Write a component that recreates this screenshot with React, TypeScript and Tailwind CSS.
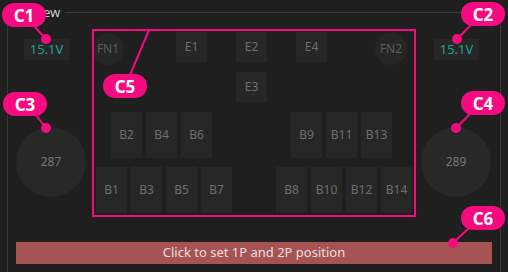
import React from "react";

const PINK = "#f60a80";

function Key({ label, ml, tall }: { label: string; ml: number; tall?: boolean }) {
  return (
    <div
      className={`flex items-center justify-center w-[31px] bg-[#272727] text-[12px] text-[#6e6e6e] ${tall ? "h-[46px]" : "h-[30px]"}`}
      style={{ marginLeft: ml }}
    >
      {label}
    </div>
  );
}

function Badge({ label, x, y }: { label: string; x: number; y: number }) {
  return (
    <div
      className="absolute w-[44px] h-[24px] rounded-full bg-[#f60a80] text-white font-bold text-[17px] flex items-center justify-center leading-none"
      style={{ left: x, top: y }}
    >
      {label}
    </div>
  );
}

export default function App() {
  return (
    <div
      className="relative w-[508px] h-[272px] overflow-hidden bg-[#1f1f1f] px-[7px] pt-[3px]"
      style={{ fontFamily: '"Noto Sans", "Open Sans", sans-serif' }}
    >
      <fieldset className="border border-[#3a3a3a] h-[300px] m-0 p-0 min-w-0">
        <legend className="ml-[0px] px-[5px] text-[13px] leading-[18px] text-[#c8c8c8]">Preview</legend>
        <div className="flex">
          {/* left column */}
          <div className="w-[84px] flex flex-col">
            <div className="ml-[16px] mt-[18px] w-[45px] h-[21px] bg-[#272727] flex items-center justify-center text-[13px] text-[#1ba39a]">
              15.1V
            </div>
            <div className="ml-[8px] mt-[67px] w-[70px] h-[70px] rounded-full bg-[#282828] flex items-center justify-center text-[12px] text-[#777]">
              287
            </div>
          </div>
          {/* center */}
          <div className="w-[323px] flex flex-col pt-[11px]">
            <div className="flex items-start h-[33px]">
              <div className="mt-[1px] w-[32px] h-[32px] rounded-full bg-[#262626] flex items-center justify-center text-[12px] text-[#5c5c5c]">
                FN1
              </div>
              <Key label="E1" ml={52} />
              <Key label="E2" ml={29} />
              <Key label="E4" ml={29} />
              <div className="ml-[48px] mt-[1px] w-[32px] h-[32px] rounded-full bg-[#262626] flex items-center justify-center text-[12px] text-[#5c5c5c]">
                FN2
              </div>
            </div>
            <div className="flex mt-[7px]">
              <Key label="E3" ml={144} />
            </div>
            <div className="flex mt-[10px]">
              <Key label="B2" ml={19} tall />
              <Key label="B4" ml={4} tall />
              <Key label="B6" ml={4} tall />
              <Key label="B9" ml={79} tall />
              <Key label="B11" ml={4} tall />
              <Key label="B13" ml={4} tall />
            </div>
            <div className="flex mt-[9px]">
              <Key label="B1" ml={4} tall />
              <Key label="B3" ml={4} tall />
              <Key label="B5" ml={4} tall />
              <Key label="B7" ml={4} tall />
              <Key label="B8" ml={44} tall />
              <Key label="B10" ml={4} tall />
              <Key label="B12" ml={4} tall />
              <Key label="B14" ml={4} tall />
            </div>
          </div>
          {/* right column */}
          <div className="flex-1 flex flex-col">
            <div className="ml-[19px] mt-[18px] w-[45px] h-[21px] bg-[#272727] flex items-center justify-center text-[13px] text-[#1ba39a]">
              15.1V
            </div>
            <div className="ml-[6px] mt-[67px] w-[70px] h-[70px] rounded-full bg-[#282828] flex items-center justify-center text-[12px] text-[#777]">
              289
            </div>
          </div>
        </div>
        <div className="ml-[8px] mt-[29px] w-[476px] h-[22px] bg-[#a65353] flex items-center justify-center text-[13px] text-[#ecdede]">
          Click to set 1P and 2P position
        </div>
      </fieldset>

      {/* annotation overlay */}
      <div className="absolute left-[92px] top-[29px] w-[324px] h-[188px] border-2 border-[#f60a80]" />
      <svg className="absolute left-0 top-0" width={508} height={272}>
        <g stroke={PINK} strokeWidth={2} fill={PINK}>
          <line x1={34} y1={26} x2={46} y2={39} />
          <circle cx={46} cy={39} r={5} stroke="none" />
          <line x1={471} y1={25} x2={457} y2={39} />
          <circle cx={457} cy={39} r={5} stroke="none" />
          <line x1={35} y1={114} x2={46} y2={128} />
          <circle cx={46} cy={128} r={5} stroke="none" />
          <line x1={471} y1={113} x2={456} y2={128} />
          <circle cx={456} cy={128} r={5} stroke="none" />
          <line x1={130} y1={75} x2={149} y2={30} />
          <line x1={469} y1={228} x2={453} y2={243} />
          <circle cx={453} cy={243} r={5} stroke="none" />
        </g>
      </svg>
      <Badge label="C1" x={2} y={3} />
      <Badge label="C2" x={461} y={2} />
      <Badge label="C3" x={3} y={92} />
      <Badge label="C4" x={461} y={91} />
      <Badge label="C5" x={103} y={74} />
      <Badge label="C6" x={461} y={206} />
    </div>
  );
}
